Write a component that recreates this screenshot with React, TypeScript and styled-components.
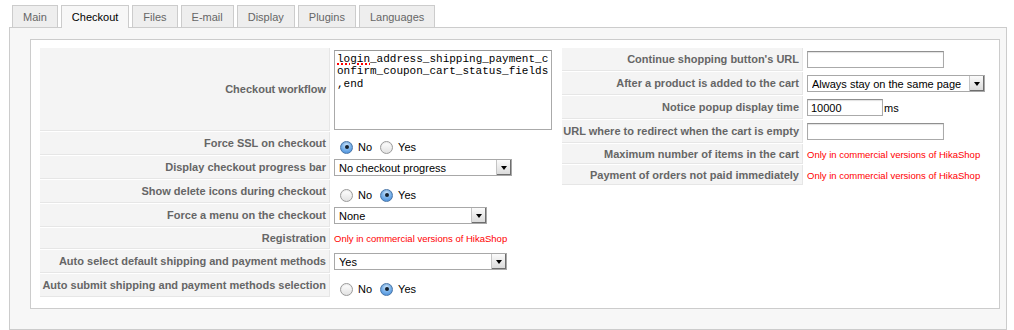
import React from "react";
import styled, { createGlobalStyle, css } from "styled-components";

const GlobalStyle = createGlobalStyle`
  * { box-sizing: border-box; }
  body {
    margin: 0;
    background: #fff;
    font-family: "Liberation Sans", Arial, sans-serif;
  }
`;

const Page = styled.div`
  padding: 5px 0 0 9px;
`;

const TabBar = styled.div`
  display: flex;
  align-items: flex-end;
  gap: 3px;
  height: 22px;
  padding-left: 3px;
`;

const Tab = styled.div<{ $active?: boolean }>`
  height: 22px;
  padding: 0 10px;
  display: flex;
  align-items: center;
  border: 1px solid #ccc;
  border-bottom: 0;
  background: #eee;
  color: #666;
  font-size: 11px;
  ${(p) =>
    p.$active &&
    css`
      position: relative;
      z-index: 1;
      height: 23px;
      margin-bottom: -1px;
      padding-bottom: 1px;
      background: #f7f7f7;
      color: #000;
    `}
`;

const Panel = styled.div`
  width: 998px;
  border: 1px solid #ccc;
  background: #f7f7f7;
  padding: 11px 6px 20px 20px;
`;

const Fieldset = styled.div`
  display: flex;
  align-items: flex-start;
  border: 1px solid #ccc;
  background: #fff;
  padding: 7px 8px 10px 8px;
`;

const ParamGrid = styled.div<{ $key: number; $value: number }>`
  display: grid;
  grid-template-columns: ${(p) => p.$key}px ${(p) => p.$value}px;
  gap: 1px;
  padding: 1px;
`;

const Key = styled.div<{ $h: number }>`
  height: ${(p) => p.$h}px;
  display: flex;
  align-items: center;
  justify-content: flex-end;
  padding-right: 3px;
  background: #f4f4f4;
  border-right: 1px solid #e6e6e6;
  border-bottom: 1px solid #e6e6e6;
  color: #666;
  font-size: 11px;
  font-weight: bold;
  white-space: nowrap;
`;

const Value = styled.div<{ $pt?: number }>`
  display: flex;
  align-items: center;
  padding: ${(p) => p.$pt || 0}px 0 0 3px;
  font-size: 11px;
  color: #000;
`;

const Workflow = styled.div`
  width: 218px;
  height: 80px;
  border: 1px solid #aaa;
  border-top-color: #999;
  padding: 2px 2px;
  font-family: "Liberation Mono", "Courier New", monospace;
  font-size: 11px;
  line-height: 12.5px;
  white-space: pre;
  overflow: hidden;
  color: #000;
`;

const Misspelled = styled.span`
  text-decoration: underline dotted #f00;
  text-decoration-thickness: 2px;
  text-underline-offset: 2px;
`;

const RadioGroup = styled.div`
  display: flex;
  align-items: center;
  padding-left: 6px;
`;

const RadioDot = styled.span<{ $checked?: boolean }>`
  width: 13px;
  height: 13px;
  border-radius: 50%;
  display: flex;
  align-items: center;
  justify-content: center;
  border: 1px solid #9a9a9a;
  background: linear-gradient(#ffffff, #e2e2e2);
  box-shadow: inset 0 1px 1px rgba(0, 0, 0, 0.08);
  ${(p) =>
    p.$checked &&
    css`
      border-color: #4a76a8;
      background: radial-gradient(circle at 50% 30%, #cfe6fb 0%, #7fb6ec 45%, #3a84d6 100%);
      &::after {
        content: "";
        width: 4px;
        height: 4px;
        border-radius: 50%;
        background: #14202e;
      }
    `}
`;

const RadioText = styled.span`
  margin: 0 8px 0 5px;
  font-size: 11px;
`;

const SelectBox = styled.span<{ $w: number }>`
  width: ${(p) => p.$w}px;
  height: 17px;
  display: inline-flex;
  align-items: stretch;
  border: 1px solid #a8a8a8;
  background: #fff;
`;

const NativeSelect = styled.select`
  flex: 1;
  min-width: 0;
  appearance: none;
  border: 0;
  outline: none;
  background: transparent;
  padding: 0 4px;
  font-family: "Liberation Sans", Arial, sans-serif;
  font-size: 11px;
  color: #000;
`;

const Arrow = styled.span`
  width: 15px;
  display: flex;
  align-items: center;
  justify-content: center;
  background: linear-gradient(#fbfbfb, #d9d9d9);
  border-left: 1px solid #c4c4c4;
  box-shadow: inset -1px -1px 0 #6e6e6e;
  &::after {
    content: "";
    margin: 1px 1px 0 0;
    border-left: 3.5px solid transparent;
    border-right: 3.5px solid transparent;
    border-top: 4px solid #000;
  }
`;

const TextInput = styled.input<{ $w: number }>`
  width: ${(p) => p.$w}px;
  height: 17px;
  border: 1px solid #aaa;
  border-top-color: #8f8f8f;
  box-shadow: inset 0 1px 1px rgba(0, 0, 0, 0.12);
  padding: 0 3px;
  font-family: "Liberation Sans", Arial, sans-serif;
  font-size: 11px;
  color: #000;
  outline: none;
`;

const Unit = styled.span`
  margin-left: 1px;
  font-size: 11px;
`;

const Commercial = styled.span`
  color: #f00;
  font-size: 9.5px;
`;

const tabs = ["Main", "Checkout", "Files", "E-mail", "Display", "Plugins", "Languages"];

const Radios: React.FC<{ value: "no" | "yes" }> = ({ value }) => (
  <RadioGroup>
    <RadioDot $checked={value === "no"} />
    <RadioText>No</RadioText>
    <RadioDot $checked={value === "yes"} />
    <RadioText>Yes</RadioText>
  </RadioGroup>
);

const Select: React.FC<{ w: number; value: string }> = ({ w, value }) => (
  <SelectBox $w={w}>
    <NativeSelect defaultValue={value}>
      <option>{value}</option>
    </NativeSelect>
    <Arrow />
  </SelectBox>
);

const ONLY = "Only in commercial versions of HikaShop";

const App: React.FC = () => {
  return (
    <Page>
      <GlobalStyle />
      <TabBar>
        {tabs.map((t) => (
          <Tab key={t} $active={t === "Checkout"}>
            {t}
          </Tab>
        ))}
      </TabBar>
      <Panel>
        <Fieldset>
          <ParamGrid $key={290} $value={229}>
            <Key $h={83}>Checkout workflow</Key>
            <Value>
              <Workflow>
                <Misspelled>login</Misspelled>
                {"_address_shipping_payment_c\nonfirm_coupon_cart_status_fields\n,end"}
              </Workflow>
            </Value>

            <Key $h={23}>Force SSL on checkout</Key>
            <Value $pt={7}>
              <Radios value="no" />
            </Value>

            <Key $h={23}>Display checkout progress bar</Key>
            <Value>
              <Select w={178} value="No checkout progress" />
            </Value>

            <Key $h={23}>Show delete icons during checkout</Key>
            <Value $pt={7}>
              <Radios value="yes" />
            </Value>

            <Key $h={23}>Force a menu on the checkout</Key>
            <Value>
              <Select w={153} value="None" />
            </Value>

            <Key $h={21}>Registration</Key>
            <Value>
              <Commercial>{ONLY}</Commercial>
            </Value>

            <Key $h={23}>Auto select default shipping and payment methods</Key>
            <Value>
              <Select w={173} value="Yes" />
            </Value>

            <Key $h={23}>Auto submit shipping and payment methods selection</Key>
            <Value $pt={7}>
              <Radios value="yes" />
            </Value>
          </ParamGrid>

          <ParamGrid $key={241} $value={185}>
            <Key $h={23}>Continue shopping button's URL</Key>
            <Value>
              <TextInput $w={137} defaultValue="" />
            </Value>

            <Key $h={23}>After a product is added to the cart</Key>
            <Value>
              <Select w={178} value="Always stay on the same page" />
            </Value>

            <Key $h={23}>Notice popup display time</Key>
            <Value>
              <TextInput $w={76} defaultValue="10000" />
              <Unit>ms</Unit>
            </Value>

            <Key $h={23}>URL where to redirect when the cart is empty</Key>
            <Value>
              <TextInput $w={137} defaultValue="" />
            </Value>

            <Key $h={20}>Maximum number of items in the cart</Key>
            <Value>
              <Commercial>{ONLY}</Commercial>
            </Value>

            <Key $h={20}>Payment of orders not paid immediately</Key>
            <Value>
              <Commercial>{ONLY}</Commercial>
            </Value>
          </ParamGrid>
        </Fieldset>
      </Panel>
    </Page>
  );
};

export default App;
